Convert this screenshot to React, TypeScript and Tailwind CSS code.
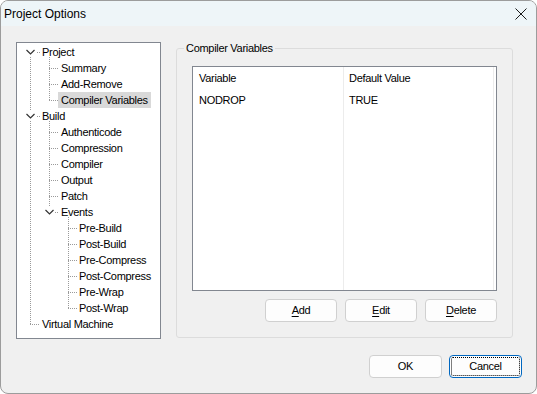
import React from "react";

type Row = { label: string; level: 0 | 1 | 2; selected?: boolean };

const rows: Row[] = [
  { label: "Project", level: 0 },
  { label: "Summary", level: 1 },
  { label: "Add-Remove", level: 1 },
  { label: "Compiler Variables", level: 1, selected: true },
  { label: "Build", level: 0 },
  { label: "Authenticode", level: 1 },
  { label: "Compression", level: 1 },
  { label: "Compiler", level: 1 },
  { label: "Output", level: 1 },
  { label: "Patch", level: 1 },
  { label: "Events", level: 1 },
  { label: "Pre-Build", level: 2 },
  { label: "Post-Build", level: 2 },
  { label: "Pre-Compress", level: 2 },
  { label: "Post-Compress", level: 2 },
  { label: "Pre-Wrap", level: 2 },
  { label: "Post-Wrap", level: 2 },
  { label: "Virtual Machine", level: 0 },
];

const padFor: Record<number, string> = {
  0: "pl-[22px]",
  1: "pl-[41px]",
  2: "pl-[59px]",
};

function cy(i: number) {
  return 9.5 + 16 * i;
}

function TreeLines() {
  const dot = { stroke: "#9a9a9a", strokeWidth: 1, strokeDasharray: "1 1", shapeRendering: "crispEdges" as const };
  const chev = (cx: number, c: number) => (
    <polyline
      points={`${cx - 4},${c - 2} ${cx},${c + 2} ${cx + 4},${c - 2}`}
      fill="none"
      stroke="#333"
      strokeWidth={1.2}
    />
  );
  const level1Rows = [1, 2, 3, 5, 6, 7, 8, 9];
  const level2Rows = [11, 12, 13, 14, 15, 16];
  return (
    <svg className="absolute inset-0 pointer-events-none" width="143" height="295">
      {/* root vertical */}
      <line x1={13.5} y1={14} x2={13.5} y2={68} {...dot} />
      <line x1={13.5} y1={78} x2={13.5} y2={281} {...dot} />
      {/* root horizontals */}
      <line x1={20} y1={cy(0)} x2={23} y2={cy(0)} {...dot} />
      <line x1={20} y1={cy(4)} x2={23} y2={cy(4)} {...dot} />
      <line x1={13} y1={cy(17)} x2={23} y2={cy(17)} {...dot} />
      {/* project children */}
      <line x1={32.5} y1={14} x2={32.5} y2={57} {...dot} />
      {/* build children */}
      <line x1={32.5} y1={78} x2={32.5} y2={164} {...dot} />
      {level1Rows.map((i) => (
        <line key={i} x1={32} y1={cy(i)} x2={41} y2={cy(i)} {...dot} />
      ))}
      <line x1={38} y1={cy(10)} x2={41} y2={cy(10)} {...dot} />
      {/* events children */}
      <line x1={51.5} y1={174} x2={51.5} y2={265} {...dot} />
      {level2Rows.map((i) => (
        <line key={i} x1={51} y1={cy(i)} x2={60} y2={cy(i)} {...dot} />
      ))}
      {chev(13.5, 9)}
      {chev(13.5, 73)}
      {chev(32.5, 169)}
    </svg>
  );
}

function Btn({ children, w = "w-[72px]" }: { children: React.ReactNode; w?: string }) {
  return (
    <button
      className={`${w} h-[23px] rounded-[4px] border border-[#d0d0d0] bg-[#fdfdfd] text-[11px] tracking-[-0.3px] text-black flex items-center justify-center`}
    >
      {children}
    </button>
  );
}

export default function App() {
  return (
    <div className="w-[537px] h-[394px] font-['Liberation_Sans',Arial,sans-serif] text-black">
      <div className="w-[537px] h-[394px] border border-[#9c9c9c] rounded-[8px] overflow-hidden bg-[#f0f0f0] flex flex-col">
        {/* title bar */}
        <div className="h-[25px] bg-[#eef5f8] flex items-center justify-between pl-[3px] pr-[9px] shrink-0">
          <span className="text-[12px]">Project Options</span>
          <svg width="12" height="12" viewBox="0 0 12 12">
            <path d="M0.5 0.5 L11.5 11.5 M11.5 0.5 L0.5 11.5" stroke="#1a1a1a" strokeWidth="1" fill="none" />
          </svg>
        </div>

        {/* body */}
        <div className="pt-[16px] pl-[15px] flex gap-[15px]">
          {/* tree */}
          <div className="relative w-[145px] h-[297px] border border-[#828790] bg-white pt-[1px] shrink-0">
            <TreeLines />
            <div className="relative flex flex-col text-[11px] tracking-[-0.3px]">
              {rows.map((r, i) => (
                <div key={i} className={`h-[16px] flex items-center ${padFor[r.level]}`}>
                  <span
                    className={`px-[3px] h-[16px] leading-[16px] ${r.selected ? "bg-[#d9d9d9]" : ""}`}
                  >
                    {r.label}
                  </span>
                </div>
              ))}
            </div>
          </div>

          {/* group box */}
          <div className="relative mt-[6px] w-[337px] h-[290px] border border-[#dcdcdc] rounded-[3px] pl-[15px] pt-[17px] shrink-0">
            <span className="absolute -top-[8px] left-[7px] px-[2px] bg-[#f0f0f0] text-[11px] tracking-[-0.3px] leading-[14px]">
              Compiler Variables
            </span>
            <div className="w-[305px] flex flex-col">
              <div className="h-[225px] border border-[#828790] bg-white flex text-[11px] tracking-[-0.3px]">
                <div className="w-[151px] border-r border-[#ececec] flex flex-col">
                  <div className="h-[23px] pl-[6px] flex items-center">Variable</div>
                  <div className="h-[20px] pl-[6px] flex items-center">NODROP</div>
                </div>
                <div className="w-[150px] border-r border-[#ececec] flex flex-col">
                  <div className="h-[23px] pl-[5px] flex items-center">Default Value</div>
                  <div className="h-[20px] pl-[5px] flex items-center">TRUE</div>
                </div>
              </div>
              <div className="mt-[8px] flex justify-end gap-[8px]">
                <Btn>
                  <span className="underline underline-offset-2">A</span>dd
                </Btn>
                <Btn>
                  <span className="underline underline-offset-2">E</span>dit
                </Btn>
                <Btn>
                  <span className="underline underline-offset-2">D</span>elete
                </Btn>
              </div>
            </div>
          </div>
        </div>

        {/* bottom buttons */}
        <div className="mt-[16px] pr-[14px] flex justify-end gap-[7px]">
          <Btn w="w-[73px]">OK</Btn>
          <button className="w-[73px] h-[23px] rounded-[4px] border border-[#0067c0] bg-[#fdfdfd] text-[11px] tracking-[-0.3px] text-black flex items-center justify-center outline-1 outline-dotted outline-black outline-offset-[-3px]">
            Cancel
          </button>
        </div>
      </div>
    </div>
  );
}
